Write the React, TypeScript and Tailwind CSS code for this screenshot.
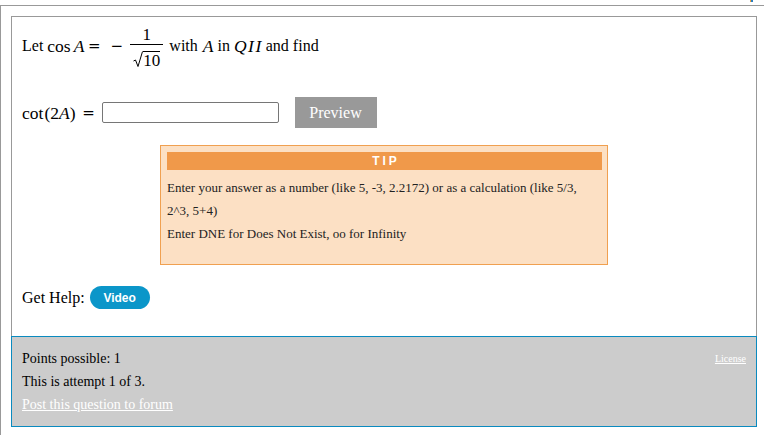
export default function App() {
  return (
    <div className="min-h-screen bg-white font-['Liberation_Serif','Times_New_Roman',serif] text-black">
      <div className="flex h-[5px] items-start justify-end pr-[11px]">
        <span className="h-[2px] w-px bg-[#e8a040]" />
        <span className="h-[2px] w-[2px] bg-[#2a7fc0]" />
      </div>
      <div className="min-h-[430px] border-l border-t border-[#999] pl-[10px] pt-[10px]">
        <div className="w-[746px]">
          {/* question */}
          <div className="border-x border-t border-[#999] px-[10px] pb-[27px] pt-[2px]">
            <div className="flex h-[51px] items-center text-[16px] leading-[20px]">
              <span className="pt-[2px]">Let</span>
              <span className="ml-[4px] pt-[2px] text-[17.5px]">cos</span>
              <span className="ml-[3px] pt-[2px] text-[17.5px] italic">A</span>
              <span className="ml-[3px] inline-block w-[14px] pt-[2px] text-center font-['DejaVu_Serif',serif] text-[15px]">=</span>
              <span className="ml-[9px] inline-block w-[13px] pt-[2px] text-center font-['DejaVu_Serif',serif] text-[15px]">−</span>
              <Fraction />
              <span className="ml-[6px] pt-[2px]">with</span>
              <span className="ml-[5px] pt-[2px] text-[17.5px] italic">A</span>
              <span className="ml-[4px] pt-[2px]">in</span>
              <span className="ml-[4px] pt-[2px] text-[17.5px] italic tracking-[1.5px]">QII</span>
              <span className="ml-[3px] pt-[2px]">and find</span>
            </div>

            <div className="mt-[27px] flex h-[31px] items-center text-[17.5px] leading-[20px]">
              <span>cot</span>
              <span className="ml-[1px]">(2</span>
              <span className="italic">A</span>
              <span>)</span>
              <span className="ml-[6px] inline-block w-[14px] text-center font-['DejaVu_Serif',serif] text-[15px]">=</span>
              <input
                type="text"
                className="ml-[6px] h-[21px] w-[177px] rounded-[2px] border border-[#767676] bg-white px-1 text-[14px] outline-none"
              />
              <button className="ml-[16px] h-[31px] w-[82px] bg-[#999] text-[16px] text-white">
                Preview
              </button>
            </div>

            <div className="ml-[138px] mt-[17px] w-[448px] border border-[#f0a050] bg-[#fce0c4] pb-[19px] pl-[6px] pr-[5px] pt-[6px]">
              <div className="flex h-[18px] items-center justify-center bg-[#f0994a] pl-[3px] font-['Liberation_Sans',Arial,sans-serif] text-[12px] font-bold tracking-[3px] text-white">
                TIP
              </div>
              <div className="mt-[6px] w-[425px] text-[13px] leading-[23px] text-[#222]">
                <p>Enter your answer as a number (like 5, -3, 2.2172) or as a calculation (like 5/3, 2^3, 5+4)</p>
                <p>Enter DNE for Does Not Exist, oo for Infinity</p>
              </div>
            </div>

            <div className="mt-[21px] flex h-[23px] items-center text-[16px]">
              <span>Get Help:</span>
              <button className="ml-[5px] h-[23px] w-[60px] rounded-full bg-[#0b96c9] font-['Liberation_Sans',Arial,sans-serif] text-[12px] font-bold text-white">
                Video
              </button>
            </div>
          </div>

          {/* footer */}
          <div className="border border-[#0a8abf] bg-[#ccc] px-[10px] py-[10px] text-[14px] leading-[23px]">
            <div className="flex items-center justify-between">
              <span>Points possible: 1</span>
              <a href="#" className="text-[10px] text-white underline">
                License
              </a>
            </div>
            <div>This is attempt 1 of 3.</div>
            <a href="#" className="text-white underline">
              Post this question to forum
            </a>
          </div>
        </div>
      </div>
    </div>
  );
}

function Fraction() {
  return (
    <span className="ml-[7px] inline-flex flex-col items-center">
      <span className="px-[2px] pb-[1px] pt-[8px] text-[17px] leading-[16px]">1</span>
      <span className="h-px w-[33px] bg-black" />
      <span className="flex items-end pb-[1px] pt-[6px] leading-[16px]">
        <svg width="10" height="17" viewBox="0 0 10 17" className="mb-[1px]">
          <path d="M0.5 10 L2.5 9 L5 15.5 L9.5 0.5" fill="none" stroke="black" strokeWidth="1" />
        </svg>
        <span className="border-t border-black pt-[1px] text-[17px] leading-[16px]">10</span>
      </span>
    </span>
  );
}
